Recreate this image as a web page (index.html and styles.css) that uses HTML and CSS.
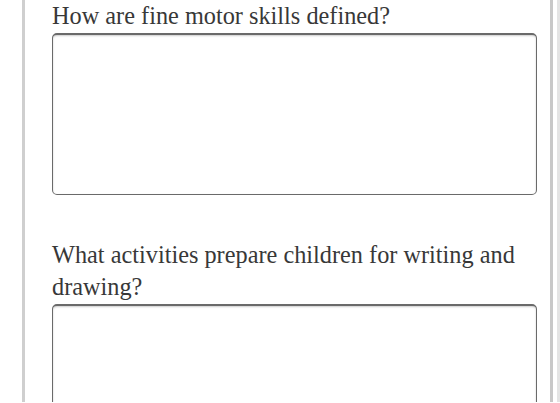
FILE: index.html
```html
<!DOCTYPE html>
<html lang="en">
<head>
  <meta charset="UTF-8">
  <meta name="viewport" content="width=device-width, initial-scale=1.0">
  <title>Fine Motor Skills</title>
  <link rel="stylesheet" href="styles.css">
</head>
<body>
  <div class="frame">
    <div class="sheet">
      <div class="question">
        <label class="question-label" for="q1">How are fine motor skills defined?</label>
        <textarea id="q1" class="answer"></textarea>
      </div>
      <div class="question">
        <label class="question-label" for="q2">What activities prepare children for writing and drawing?</label>
        <textarea id="q2" class="answer"></textarea>
      </div>
    </div>
  </div>
</body>
</html>
```

FILE: styles.css
```css
* {
  box-sizing: border-box;
  margin: 0;
  padding: 0;
}
body {
  background: #ffffff;
  font-family: "Liberation Serif", "Times New Roman", serif;
  color: #383838;
  overflow: hidden;
}
.frame {
  height: 402px;
  padding-left: 22px;
  width: 560px;
  border-right: 3px solid #e4e4e4;
  padding-right: 4px;
  overflow: hidden;
}
.sheet {
  height: 100%;
  border-left: 3px solid #cfcfcf;
  border-right: 3px solid #c8c8c8;
  padding: 0 13px 0 27px;
}
.question {
  display: flex;
  flex-direction: column;
}
.question + .question {
  margin-top: 44px;
}
.question-label {
  font-size: 24.3px;
  line-height: 32px;
}
.answer {
  display: block;
  width: 100%;
  height: 162px;
  margin-top: 1px;
  border: 1px solid #6a6a6a;
  border-top-width: 2px;
  border-radius: 5px;
  box-shadow: inset 0 1px 2px rgba(0, 0, 0, 0.2);
  background: #ffffff;
  resize: none;
  font: inherit;
}
```
